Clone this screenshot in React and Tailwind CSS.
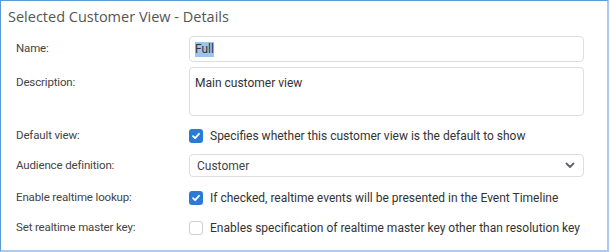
import React from "react";

function Check({ checked }) {
  if (checked) {
    return (
      <span className="flex h-[14px] w-[14px] shrink-0 items-center justify-center rounded-[3px] bg-[#2b7bd6]">
        <svg width="10" height="10" viewBox="0 0 10 10" fill="none">
          <path d="M2 5.2 L4.1 7.2 L8 2.8" stroke="white" strokeWidth="1.8" strokeLinecap="round" strokeLinejoin="round" />
        </svg>
      </span>
    );
  }
  return <span className="h-[14px] w-[14px] shrink-0 rounded-[3px] border border-[#cfcfcf] bg-white" />;
}

function Label({ children }) {
  return <div className="w-[188px] shrink-0 pl-[15px] text-[11.5px] tracking-[-0.15px] text-[#444]">{children}</div>;
}

export default function App() {
  return (
    <div
      className="h-[252px] w-[609px] border-l border-t border-r-2 border-b-2 border-l-[#5a9bd8] border-t-[#5a9bd8] border-r-[#a9cbee] border-b-[#a9cbee] bg-white"
      style={{ fontFamily: "Roboto, 'Liberation Sans', sans-serif" }}
    >
      <div
        className="pl-[7px] pt-[6px] text-[14.5px] leading-[20px] text-[#555]"
        style={{ fontFamily: "'Open Sans', sans-serif" }}
      >
        Selected Customer View - Details
      </div>
      <div className="mt-[9px] flex flex-col">
        <div className="flex h-[26px] items-center">
          <Label>Name:</Label>
          <div className="flex h-[26px] w-[395px] items-center rounded-[4px] border border-[#dedede] pl-[5px] text-[12px] text-[#333]">
            <span className="bg-[#9bc4ef] leading-[15px]">Full</span>
          </div>
        </div>
        <div className="mt-[5px] flex h-[49px]">
          <div className="pt-[7px]">
            <Label>Description:</Label>
          </div>
          <div className="h-[49px] w-[395px] rounded-[4px] border border-[#dedede] pl-[5px] pt-[6px] text-[12px] text-[#333]">
            Main customer view
          </div>
        </div>
        <div className="mt-[11px] flex h-[18px] items-center">
          <Label>Default view:</Label>
          <div className="flex items-center gap-[7px] text-[12px] text-[#333]">
            <Check checked />
            <span>Specifies whether this customer view is the default to show</span>
          </div>
        </div>
        <div className="mt-[9px] flex h-[23px] items-center">
          <Label>Audience definition:</Label>
          <div className="flex h-[23px] w-[395px] items-center justify-between rounded-[4px] border border-[#dedede] pl-[7px] pr-[8px] text-[12px] text-[#444]">
            <span>Customer</span>
            <svg width="10" height="7" viewBox="0 0 10 7" fill="none">
              <path d="M1.5 1.5 L5 5 L8.5 1.5" stroke="#5a6270" strokeWidth="1.8" strokeLinecap="round" strokeLinejoin="round" />
            </svg>
          </div>
        </div>
        <div className="mt-[12px] flex h-[18px] items-center">
          <Label>Enable realtime lookup:</Label>
          <div className="flex items-center gap-[7px] text-[12px] text-[#333]">
            <Check checked />
            <span>If checked, realtime events will be presented in the Event Timeline</span>
          </div>
        </div>
        <div className="mt-[12px] flex h-[18px] items-center">
          <Label>Set realtime master key:</Label>
          <div className="flex items-center gap-[7px] text-[12px] text-[#333]">
            <Check checked={false} />
            <span>Enables specification of realtime master key other than resolution key</span>
          </div>
        </div>
      </div>
    </div>
  );
}
